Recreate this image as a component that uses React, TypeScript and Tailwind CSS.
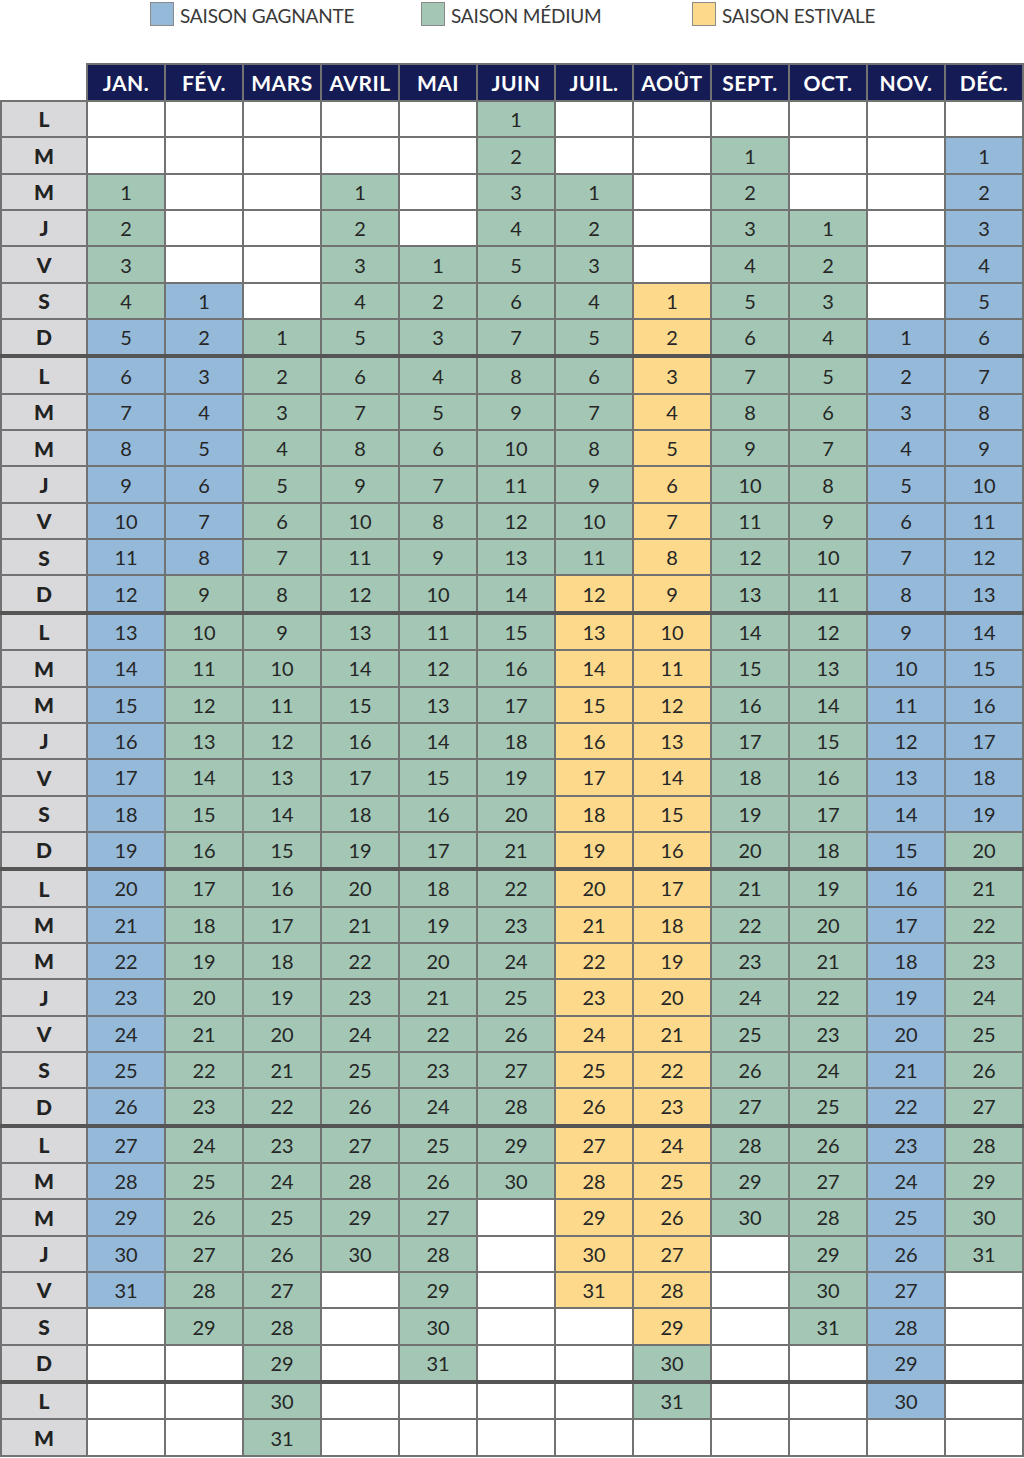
import React from "react";

type Season = "blue" | "green" | "yellow";

// each month: row index of the 1st, number of days, and season breakpoints
type Month = { label: string; start: number; days: number; spans: [number, Season][] };

// spans: [first day of span, season]
const months: Month[] = [
  { label: "JAN.", start: 2, days: 31, spans: [[1, "green"], [5, "blue"]] },
  { label: "FÉV.", start: 5, days: 29, spans: [[1, "blue"], [9, "green"]] },
  { label: "MARS", start: 6, days: 31, spans: [[1, "green"]] },
  { label: "AVRIL", start: 2, days: 30, spans: [[1, "green"]] },
  { label: "MAI", start: 4, days: 31, spans: [[1, "green"]] },
  { label: "JUIN", start: 0, days: 30, spans: [[1, "green"]] },
  { label: "JUIL.", start: 2, days: 31, spans: [[1, "green"], [12, "yellow"]] },
  { label: "AOÛT", start: 5, days: 31, spans: [[1, "yellow"], [30, "green"]] },
  { label: "SEPT.", start: 1, days: 30, spans: [[1, "green"]] },
  { label: "OCT.", start: 3, days: 31, spans: [[1, "green"]] },
  { label: "NOV.", start: 6, days: 30, spans: [[1, "blue"]] },
  { label: "DÉC.", start: 1, days: 31, spans: [[1, "blue"], [20, "green"]] },
];

const weekDays = ["L", "M", "M", "J", "V", "S", "D"];
const ROWS = 37;

const seasonBg: Record<Season, string> = {
  blue: "bg-[#95b9d9]",
  green: "bg-[#a3c7b4]",
  yellow: "bg-[#fdd98c]",
};

function seasonOf(m: Month, day: number): Season {
  let s: Season = m.spans[0][1];
  for (const [from, season] of m.spans) {
    if (day >= from) s = season;
  }
  return s;
}

function LegendItem({ color, label }: { color: string; label: string }) {
  return (
    <div className="flex w-[271px] items-center gap-[6px]">
      <div className={`h-[24px] w-[24px] border border-[#8a8a8a] ${color}`} />
      <span className="pt-[2px] text-[19px] leading-none tracking-[-0.2px] text-[#3a3a3a]">{label}</span>
    </div>
  );
}

export default function App() {
  const rows = Array.from({ length: ROWS }, (_, r) => r);

  return (
    <div className="w-[1024px] bg-white font-['Lato',sans-serif]">
      <div className="flex h-[63px] items-start pl-[150px] pt-[2px]">
        <LegendItem color={seasonBg.blue} label="SAISON GAGNANTE" />
        <LegendItem color={seasonBg.green} label="SAISON MÉDIUM" />
        <LegendItem color={seasonBg.yellow} label="SAISON ESTIVALE" />
      </div>

      <div className="flex">
        <div className="w-[86px]" />
        <div className="grid w-[938px] grid-cols-[repeat(12,76px)] gap-x-[2px] bg-[#727272] px-[2px] pt-[2px]">
          {months.map((m) => (
            <div
              key={m.label}
              className="flex h-[35px] items-center justify-center bg-[#141b55] text-[21px] font-bold tracking-[0.5px] text-white"
            >
              {m.label}
            </div>
          ))}
        </div>
      </div>

      <div className="h-[2px] bg-[#727272]" />
      {rows.map((r) => (
        <React.Fragment key={r}>
          <div className="grid grid-cols-[84px_repeat(12,76px)] gap-x-[2px] bg-[#727272] px-[2px]">
            <div className="flex h-[34.35px] items-center justify-center bg-[#d9d9db] text-[21px] font-black text-[#222]">
              {weekDays[r % 7]}
            </div>
            {months.map((m) => {
              const day = r - m.start + 1;
              const has = day >= 1 && day <= m.days;
              return (
                <div
                  key={m.label}
                  className={`flex h-[34.35px] items-center justify-center text-[20px] text-[#262626] ${
                    has ? seasonBg[seasonOf(m, day)] : "bg-white"
                  }`}
                >
                  {has ? day : ""}
                </div>
              );
            })}
          </div>
          {r % 7 === 6 && r < ROWS - 1 ? (
            <div className="h-[4px] bg-[#555555]" />
          ) : (
            <div className="h-[2px] bg-[#727272]" />
          )}
        </React.Fragment>
      ))}
    </div>
  );
}
